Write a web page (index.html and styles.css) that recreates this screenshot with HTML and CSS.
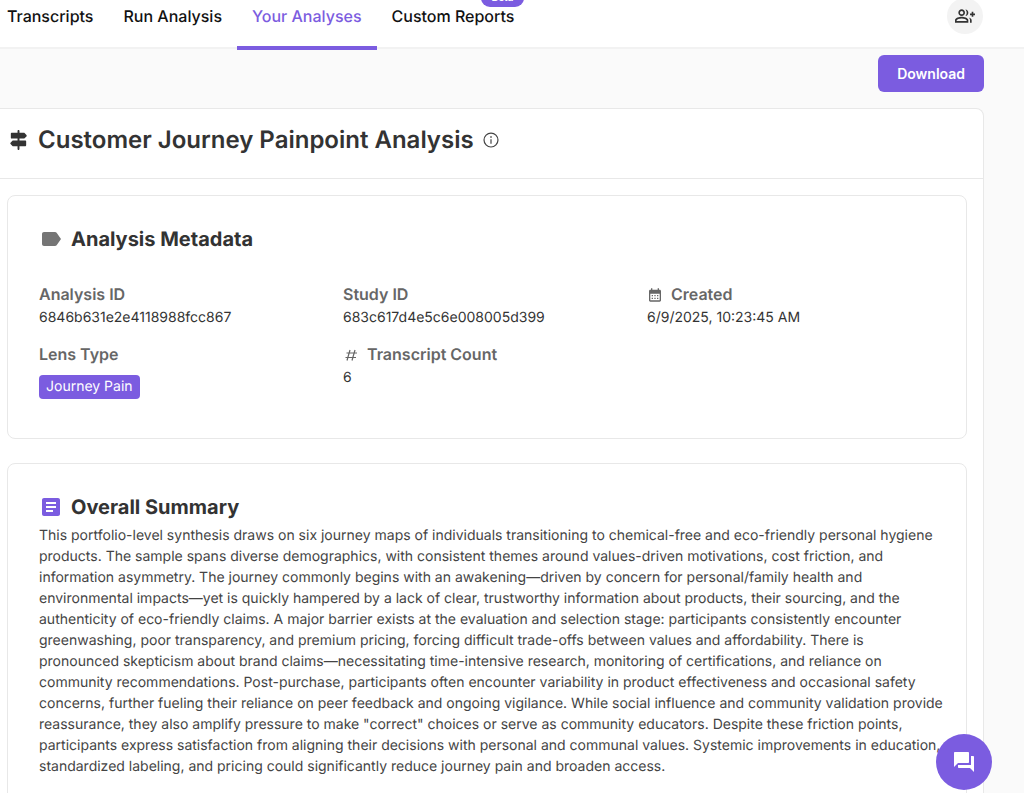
FILE: index.html
```html
<!DOCTYPE html>
<html lang="en">
<head>
  <meta charset="UTF-8">
  <meta name="viewport" content="width=device-width, initial-scale=1.0">
  <title>Customer Journey Painpoint Analysis</title>
  <link rel="stylesheet" href="styles.css">
</head>
<body>
  <header class="topbar">
    <nav class="tabs">
      <a class="tab" href="#">Transcripts</a>
      <a class="tab" href="#">Run Analysis</a>
      <a class="tab active" href="#">Your Analyses</a>
      <a class="tab" href="#">Custom Reports<span class="beta">Beta</span></a>
    </nav>
    <button class="invite" type="button" aria-label="Invite people">
      <svg width="20" height="20" viewBox="0 0 24 24"><path d="M22 9V7h-2v2h-2v2h2v2h2v-2h2V9zM8 12c2.210 0 4-1.790 4-4s-1.790-4-4-4-4 1.790-4 4 1.790 4 4 4zm0-6c1.100 0 2 .9 2 2s-.9 2-2 2-2-.9-2-2 .9-2 2-2zM8 13c-2.670 0-8 1.340-8 4v3h16v-3c0-2.660-5.330-4-8-4zm6 5H2v-.99C2.200 16.290 5.300 15 8 15s5.800 1.290 6 2v1zM12.510 4.050C13.430 5.110 14 6.490 14 8s-.57 2.890-1.490 3.950C14.470 11.700 16 10.040 16 8s-1.530-3.700-3.490-3.950zM16.530 13.830C17.420 14.660 18 15.700 18 17v3h2v-3c0-1.450-1.590-2.510-3.470-3.170z"/></svg>
    </button>
  </header>

  <main class="page">
    <div class="actions">
      <button class="download" type="button">Download</button>
    </div>

    <div class="report">
      <div class="report-head">
        <svg width="23" height="23" viewBox="0 0 24 24"><path d="M13 10h4.600c.27 0 .52-.11.710-.29l2-2c.39-.39.39-1.020 0-1.410l-2-2c-.19-.19-.44-.3-.71-.3H13V2c0-.55-.45-1-1-1s-1 .45-1 1v2H5c-.55 0-1 .45-1 1v4c0 .55.45 1 1 1h6v2H6.400c-.27 0-.52.11-.71.29l-2 2c-.39.39-.39 1.020 0 1.410l2 2c.19.190.44.290.71.290H11v3c0 .55.45 1 1 1s1-.45 1-1v-3h6c.55 0 1-.45 1-1v-4c0-.55-.45-1-1-1h-6z"/></svg>
        <h1>Customer Journey Painpoint Analysis</h1>
        <button class="info" type="button" aria-label="About this analysis">
          <svg width="18" height="18" viewBox="0 0 24 24"><circle class="ring" cx="12" cy="12" r="9.300"/><path d="M11 7h2v2h-2zm.2 4h1.600v6h-1.600z"/></svg>
        </button>
      </div>

      <div class="report-body">
        <section class="card metadata">
          <div class="card-title">
            <svg class="gray" width="24" height="24" viewBox="0 0 24 24"><path d="M17.630 5.840C17.270 5.330 16.670 5 16 5L5 5.010C3.900 5.010 3 5.900 3 7v10c0 1.100.9 1.990 2 1.990L16 19c.67 0 1.270-.33 1.630-.84L22 12l-4.370-6.160z"/></svg>
            <h2>Analysis Metadata</h2>
          </div>
          <dl class="meta-grid">
            <div>
              <dt>Analysis ID</dt>
              <dd>6846b631e2e4118988fcc867</dd>
            </div>
            <div>
              <dt>Study ID</dt>
              <dd>683c617d4e5c6e008005d399</dd>
            </div>
            <div>
              <dt>
                <svg width="16" height="16" viewBox="0 0 24 24"><path d="M19 4h-1V2h-2v2H8V2H6v2H5c-1.110 0-1.990.9-1.990 2L3 20c0 1.100.89 2 2 2h14c1.100 0 2-.9 2-2V6c0-1.100-.9-2-2-2zm0 16H5V10h14v10zM9 14H7v-2h2v2zm4 0h-2v-2h2v2zm4 0h-2v-2h2v2zm-8 4H7v-2h2v2zm4 0h-2v-2h2v2zm4 0h-2v-2h2v2z"/></svg>
                Created
              </dt>
              <dd>6/9/2025, 10:23:45 AM</dd>
            </div>
            <div>
              <dt>Lens Type</dt>
              <dd><span class="chip">Journey Pain</span></dd>
            </div>
            <div>
              <dt>
                <svg width="16" height="16" viewBox="0 0 16 16"><path class="hash" d="M7 3L4 13.500M12 3L9 13.500M3.500 6H14M2.500 10.500H13"/></svg>
                Transcript Count
              </dt>
              <dd>6</dd>
            </div>
          </dl>
        </section>

        <section class="card">
          <div class="card-title">
            <svg class="purple" width="24" height="24" viewBox="0 0 24 24"><path d="M19 3H5c-1.100 0-2 .9-2 2v14c0 1.100.9 2 2 2h14c1.100 0 2-.9 2-2V5c0-1.100-.9-2-2-2zm-5 14H7v-2h7v2zm3-4H7v-2h10v2zm0-4H7V7h10v2z"/></svg>
            <h2>Overall Summary</h2>
          </div>
          <p class="summary">This portfolio-level synthesis draws on six journey maps of individuals transitioning to chemical-free and eco-friendly personal hygiene products. The sample spans diverse demographics, with consistent themes around values-driven motivations, cost friction, and information asymmetry. The journey commonly begins with an awakening—driven by concern for personal/family health and environmental impacts—yet is quickly hampered by a lack of clear, trustworthy information about products, their sourcing, and the authenticity of eco-friendly claims. A major barrier exists at the evaluation and selection stage: participants consistently encounter greenwashing, poor transparency, and premium pricing, forcing difficult trade-offs between values and affordability. There is pronounced skepticism about brand claims—necessitating time-intensive research, monitoring of certifications, and reliance on community recommendations. Post-purchase, participants often encounter variability in product effectiveness and occasional safety concerns, further fueling their reliance on peer feedback and ongoing vigilance. While social influence and community validation provide reassurance, they also amplify pressure to make "correct" choices or serve as community educators. Despite these friction points, participants express satisfaction from aligning their decisions with personal and communal values. Systemic improvements in education, standardized labeling, and pricing could significantly reduce journey pain and broaden access.</p>
        </section>
      </div>
    </div>
  </main>

  <button class="chat" type="button" aria-label="Open chat">
    <svg width="24" height="24" viewBox="0 0 24 24"><path d="M21 6h-2v9H6v2c0 .55.45 1 1 1h11l4 4V7c0-.55-.45-1-1-1zm-4 6V3c0-.55-.45-1-1-1H3c-.55 0-1 .45-1 1v14l4-4h10c.55 0 1-.45 1-1z"/></svg>
  </button>
</body>
</html>
```
FILE: styles.css
```css
* {
  box-sizing: border-box;
}
body {
  margin: 0;
  background: #fafafa;
  color: #333;
  font-family: Inter, sans-serif;
  font-size: 14px;
  text-rendering: geometricPrecision;
  overflow-x: hidden;
}
h1, h2, p, dl, dd {
  margin: 0;
}
button {
  border: none;
  padding: 0;
  font-family: inherit;
  cursor: pointer;
}
svg {
  display: block;
  flex-shrink: 0;
  fill: currentColor;
}

.topbar {
  display: flex;
  justify-content: space-between;
  align-items: flex-start;
  padding-right: 41px;
  background: #fff;
  border-bottom: 2px solid #f2f2f2;
}
.tabs {
  display: flex;
  margin: 0 0 -3px -8px;
}
.tab {
  position: relative;
  padding: 4px 15px 18px;
  border-bottom: 4px solid transparent;
  color: #111;
  font-size: 16px;
  font-weight: 500;
  line-height: 24px;
  text-decoration: none;
}
.tab.active {
  color: #7b5ce0;
  border-color: #7b5ce0;
}
.beta {
  position: absolute;
  top: -11px;
  right: 5px;
  padding: 0 11px;
  border-radius: 9px;
  background: #7b5ce0;
  color: #fff;
  font-size: 10px;
  font-weight: 600;
  line-height: 18px;
}
.invite {
  display: flex;
  align-items: center;
  justify-content: center;
  width: 36px;
  height: 36px;
  margin-top: -2px;
  border-radius: 50%;
  background: #f3f3f3;
  color: #333;
}

.page {
  padding-right: 40px;
}
.actions {
  display: flex;
  justify-content: flex-end;
  padding: 6px 0 16px;
}
.download {
  padding: 8px 19px;
  border-radius: 6px;
  background: #7b5ce0;
  color: #fff;
  font-size: 14px;
  font-weight: 600;
  line-height: 21px;
}

.report {
  background: #fff;
  border: 1px solid #e8e8e8;
  border-left: none;
  border-radius: 0 8px 0 0;
}
.report-head {
  display: flex;
  align-items: center;
  gap: 8px;
  padding: 13px 7px 20px;
  border-bottom: 1px solid #e8e8e8;
}
h1 {
  font-size: 24px;
  font-weight: 600;
  line-height: 36px;
}
.info {
  background: none;
  color: #444;
}
.ring {
  fill: none;
  stroke: currentColor;
  stroke-width: 1.6;
}
.report-body {
  display: flex;
  flex-direction: column;
  gap: 24px;
  padding: 16px 16px 16px 7px;
}
.card {
  padding: 27px 31px 32px;
  border: 1px solid #e8e8e8;
  border-radius: 8px;
}
.card-title {
  display: flex;
  align-items: center;
  gap: 8px;
}
h2 {
  font-size: 20px;
  font-weight: 700;
  line-height: 32px;
}
.gray {
  color: #757575;
}
.purple {
  color: #7b5ce0;
}

.meta-grid {
  display: grid;
  grid-template-columns: repeat(3, 1fr);
  gap: 13px 16px;
  padding: 28px 0 7px;
}
.meta-grid dt {
  display: flex;
  align-items: center;
  gap: 8px;
  color: #666;
  font-size: 16px;
  font-weight: 600;
  line-height: 23px;
}
.meta-grid dd {
  line-height: 24px;
}
.hash {
  fill: none;
  stroke: currentColor;
  stroke-width: 1.2;
}
.chip {
  display: inline-block;
  margin-top: 9px;
  padding: 0 7px;
  border-radius: 4px;
  background: #7b5ce0;
  color: #fff;
  line-height: 24px;
}
.summary {
  margin: 2px -8px 0 0;
  color: #444;
  line-height: 21px;
}

.chat {
  position: fixed;
  right: 32px;
  bottom: 3px;
  display: flex;
  align-items: center;
  justify-content: center;
  width: 56px;
  height: 56px;
  border-radius: 50%;
  background: #7b5ce0;
  color: #fff;
}
```
